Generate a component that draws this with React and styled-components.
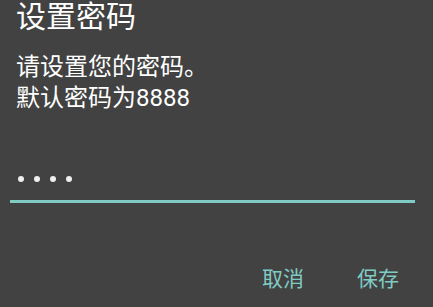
import React from 'react'
import styled, { createGlobalStyle } from 'styled-components'

const Global = createGlobalStyle`
  html, body {
    margin: 0;
    padding: 0;
    background: #424242;
  }
  body {
    font-family: Roboto, "Noto Sans CJK SC", sans-serif;
  }
`

const Dialog = styled.div`
  width: 433px;
  height: 307px;
  box-sizing: border-box;
  background: #424242;
  display: flex;
  flex-direction: column;
  padding: 0 18px 0 16px;
`

const Title = styled.h1`
  margin: 0;
  font-size: 30px;
  font-weight: 400;
  line-height: 34px;
  color: #ffffff;
`

const Message = styled.p`
  margin: 18px 0 0;
  font-size: 24px;
  line-height: 31px;
  color: #ffffff;
`

// password input with underline
const Field = styled.div`
  box-sizing: border-box;
  margin: 51px 0 0 -6px;
  height: 38px;
  display: flex;
  align-items: flex-start;
  gap: 10px;
  padding: 11px 0 0 8px;
  border-bottom: 3px solid #80cbc4;
`

const Dot = styled.span`
  width: 6px;
  height: 6px;
  border-radius: 50%;
  background: #eeeeee;
`

const Actions = styled.div`
  margin-top: auto;
  display: flex;
  justify-content: flex-end;
  gap: 53px;
  padding: 0 16px 14px 0;
`

const Action = styled.button`
  border: 0;
  background: none;
  padding: 0;
  font-family: inherit;
  font-size: 21px;
  line-height: 28px;
  color: #80cbc4;
`

export default function App() {
  return (
    <>
      <Global />
      <Dialog>
        <Title>设置密码</Title>
        <Message>
          请设置您的密码。
          <br />
          默认密码为8888
        </Message>
        <Field>
          {[0, 1, 2, 3].map(i => <Dot key={i} />)}
        </Field>
        <Actions>
          <Action>取消</Action>
          <Action>保存</Action>
        </Actions>
      </Dialog>
    </>
  )
}
